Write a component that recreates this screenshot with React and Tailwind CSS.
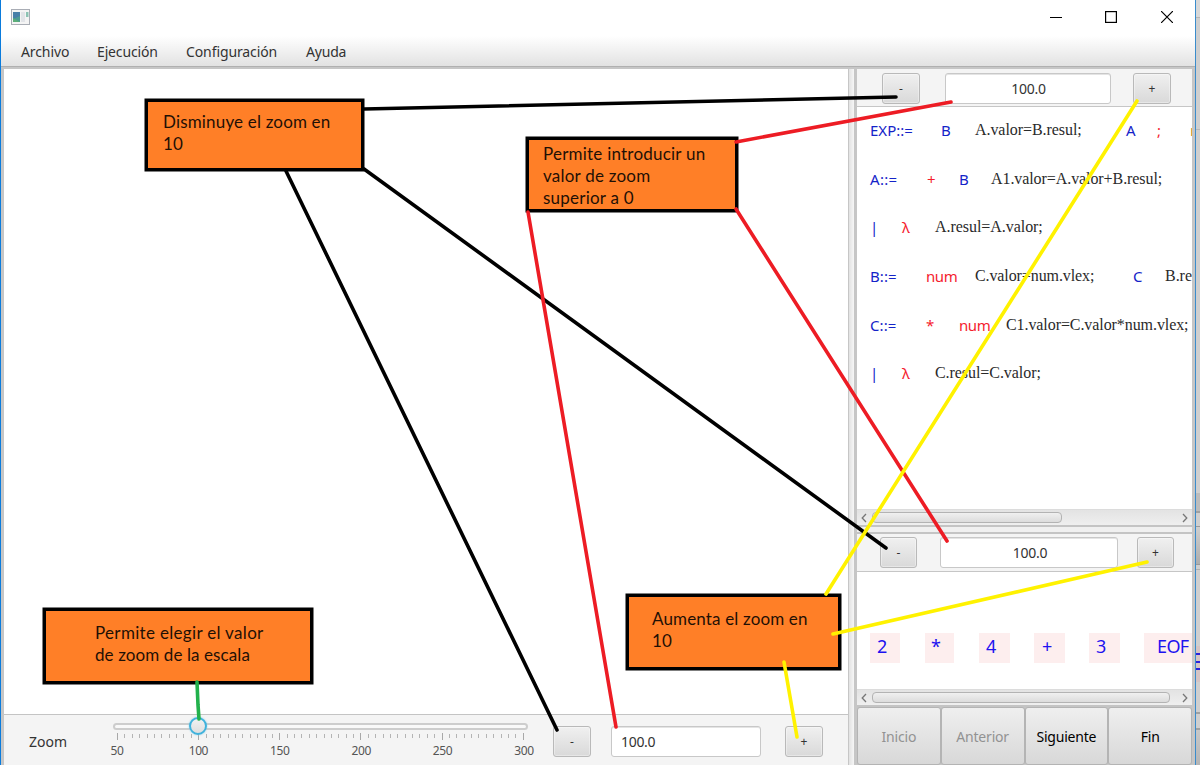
import React from 'react';

const B = 'text-[#1423c8]';
const R = 'text-[#f51c2e]';
const S = 'text-[#2a2a2a]';

/* Each symbol: text, style, column width */
const grammar = [
  [['EXP::=', B, 'w-[71px]', 'tracking-[0px]'], ['B', B, 'w-[34px]', ''], ['A.valor=B.resul;', S, 'w-[151px]', 'tracking-[-0.06px]'], ['A', B, 'w-[31px]', ''], [';', R, 'w-[33px]', ''], ['r', 'text-[#c09030]', 'w-[20px]', '']],
  [['A::=', B, 'w-[57px]', 'tracking-[0.3px]'], ['+', R, 'w-[32px]', ''], ['B', B, 'w-[32px]', ''], ['A1.valor=A.valor+B.resul;', S, 'w-[180px]', 'tracking-[-0.08px]']],
  [['|', B, 'w-[32px]', ''], ['λ', R, 'w-[33px]', ''], ['A.resul=A.valor;', S, 'w-[120px]', 'tracking-[-0.05px]']],
  [['B::=', B, 'w-[56px]', 'tracking-[0.1px]'], ['num', R, 'w-[49px]', 'tracking-[-0.4px]'], ['C.valor=num.vlex;', S, 'w-[158px]', 'tracking-[-0.1px]'], ['C', B, 'w-[32px]', ''], ['B.resul=C.resul;', S, 'w-[120px]', 'tracking-[-0.04px]']],
  [['C::=', B, 'w-[56px]', 'tracking-[0.1px]'], ['*', R, 'w-[33px]', ''], ['num', R, 'w-[47px]', 'tracking-[-0.4px]'], ['C1.valor=C.valor*num.vlex;', S, 'w-[190px]', 'tracking-[-0.08px]']],
  [['|', B, 'w-[32px]', ''], ['λ', R, 'w-[33px]', ''], ['C.resul=C.valor;', S, 'w-[120px]', 'tracking-[-0.06px]']],
];

const tokens = [
  ['2', 'w-[30px] mr-[25px] pl-[7px]'],
  ['*', 'w-[29px] mr-[25px] pl-[6px]'],
  ['4', 'w-[31px] mr-[24px] pl-[7px]'],
  ['+', 'w-[31px] mr-[24px] pl-[8px]'],
  ['3', 'w-[31px] mr-[24px] pl-[7px]'],
  ['EOF', 'w-[60px] pl-[13px] tracking-[-0.6px]'],
];

const ticks = Array.from({ length: 56 }, (_, i) => i);

function SmallButton({ children, className = '' }) {
  return (
    <button
      className={`flex shrink-0 items-center justify-center rounded-[3px] border border-[#b9b9b9] bg-linear-to-b from-[#f0f0f0] to-[#d9d9d9] text-[12px] text-[#333] shadow-[inset_0_0_0_1px_rgba(255,255,255,0.35)] ${className}`}
    >
      {children}
    </button>
  );
}

function Field({ className = '' }) {
  return (
    <div
      className={`flex shrink-0 items-center rounded-[3px] border border-[#c8c8c8] bg-white text-[14px] tracking-[-0.3px] text-[#333] shadow-[inset_0_1px_0_#e4e4e4] ${className}`}
    >
      100.0
    </div>
  );
}

function ScrollBar({ thumb }) {
  return (
    <div className="flex h-4 shrink-0 items-center border-t border-[#dcdcdc] bg-linear-to-b from-[#e3e3e3] to-[#efefef]">
      <svg className="ml-[4px] shrink-0" width="6" height="10" viewBox="0 0 6 10" fill="none" stroke="#777" strokeWidth="1.3">
        <path d="M5 1 1.2 5 5 9" />
      </svg>
      <div className="flex flex-1 pl-[5px]">
        <div className={`h-[11px] rounded-[4px] border border-[#b3b3b3] bg-linear-to-b from-[#f0f0f0] to-[#dcdcdc] ${thumb}`} />
      </div>
      <svg className="mr-[4px] shrink-0" width="6" height="10" viewBox="0 0 6 10" fill="none" stroke="#777" strokeWidth="1.3">
        <path d="M1 1 4.8 5 1 9" />
      </svg>
    </div>
  );
}

function Note({ className, children }) {
  return (
    <div className={`absolute whitespace-nowrap border-[3px] border-black bg-[#ff7f27] font-['Lato',sans-serif] text-[17px] leading-[22px] text-[#1f1005] shadow-[0_0_0_0.5px_#000] ${className}`}>
      {children}
    </div>
  );
}

function TitleBar() {
  return (
    <div className="flex h-9 shrink-0 items-start bg-white">
      <svg className="ml-[10px] mt-[9px]" width="19" height="16" viewBox="0 0 19 16">
        <rect x="0.5" y="0.5" width="18" height="15" fill="#f4f4f4" stroke="#a9adb5" />
        <rect x="2" y="3" width="7" height="10" fill="#4d9a94" />
        <path d="M2 3h7v4L2 10z" fill="#487fa8" />
        <path d="M2 13V9l7 4z" fill="#5cae78" />
        <rect x="10" y="3" width="4" height="10" fill="#e2e4e8" />
        <rect x="15" y="3" width="2.5" height="5" fill="#8cc3b4" />
      </svg>
      <div className="ml-auto flex pt-[11px]">
        <svg width="12" height="12" className="mr-[43px]" stroke="#000" strokeWidth="1" fill="none">
          <path d="M0 6.5h12" />
        </svg>
        <svg width="12" height="12" className="mr-[44px]" stroke="#000" strokeWidth="1.2" fill="none">
          <rect x="0.6" y="0.6" width="10.8" height="10.8" />
        </svg>
        <svg width="12" height="12" className="mr-[22px]" stroke="#000" strokeWidth="1.2" fill="none">
          <path d="M0 0 12 12M12 0 0 12" />
        </svg>
      </div>
    </div>
  );
}

function MenuBar() {
  return (
    <div className="flex h-[31px] shrink-0 items-center border-b border-[#b0b0b0] bg-linear-to-b from-white to-[#e2e2e2] pl-[20px] pt-px text-[14px] text-[#333]">
      <span className="w-[76px] tracking-[-0.1px]">Archivo</span>
      <span className="w-[89px] tracking-[-0.15px]">Ejecución</span>
      <span className="w-[120px] tracking-[-0.1px]">Configuración</span>
      <span className="tracking-[-0.2px]">Ayuda</span>
    </div>
  );
}

function Slider() {
  return (
    <div className="relative ml-[42px] mt-[8px] w-[415px] shrink-0">
      <div className="h-[7px] rounded-full border-2 border-[#cdcdcd] bg-[#f9f9f9]" />
      <div className="mt-[3px] flex h-[7px] justify-between px-[4px]">
        {ticks.map((i) => (
          <i key={i} className={i % 11 === 0 ? 'h-[7px] w-px bg-[#a8a8a8]' : 'mt-px h-[4px] w-px bg-[#b4b4b4]'} />
        ))}
      </div>
      <div className="-mx-[16px] mt-[2px] flex justify-between pl-[6px] pr-[6px] text-[12px] leading-[18px] tracking-[-0.4px] text-[#555]">
        {['50', '100', '150', '200', '250', '300'].map((v) => (
          <span key={v} className="w-[28px] text-center">{v}</span>
        ))}
      </div>
      <div className="absolute left-[76px] top-[-6px] h-[18px] w-[18px] rounded-full border-2 border-[#3fb2dc] bg-linear-to-b from-[#f2f2f2] to-[#dedede] shadow-[0_0_2px_#8ccfe8]" />
    </div>
  );
}

function TreePane() {
  return (
    <section className="flex w-[844px] shrink-0 flex-col">
      <div className="h-[645px] shrink-0 bg-white" />
      <div className="flex flex-1 items-start border-t border-[#c4c4c4] bg-[#f4f4f4]">
        <span className="ml-[25px] mt-[17px] w-[42px] text-[14px] leading-5 text-[#333]">Zoom</span>
        <Slider />
        <SmallButton className="ml-[25px] mt-[11px] h-[31px] w-[38px]">-</SmallButton>
        <Field className="ml-[20px] mt-[11px] h-[31px] w-[150px] pl-[9px]" />
        <SmallButton className="ml-[24px] mt-[11px] h-[31px] w-[38px]">+</SmallButton>
      </div>
    </section>
  );
}

function SidePane() {
  return (
    <section className="flex w-[335px] shrink-0 flex-col">
      <div className="flex h-[38px] shrink-0 items-start border-b border-[#c6c6c6] bg-[#f4f4f4] pt-[4px]">
        <SmallButton className="ml-[25px] h-[31px] w-[38px]">-</SmallButton>
        <Field className="ml-[25px] h-[31px] w-[166px] justify-center pl-px" />
        <SmallButton className="ml-[22px] h-[31px] w-[38px]">+</SmallButton>
      </div>
      <div className="flex h-[402px] shrink-0 flex-col overflow-hidden bg-white pt-[11px]">
        {grammar.map((row, i) => (
          <div key={i} className="flex h-[48.7px] shrink-0 whitespace-nowrap pl-[13px]">
            {row.map(([text, color, width, track], j) => (
              <span
                key={j}
                className={`shrink-0 ${color} ${width} ${track} ${color === S ? "font-['Liberation_Serif',serif] text-[16px] leading-[23px]" : 'text-[15px] leading-[24px]'}`}
              >
                {text}
              </span>
            ))}
          </div>
        ))}
      </div>
      <ScrollBar thumb="w-[190px]" />
      <div className="h-[9px] shrink-0 border-y-2 border-[#c4c4c4] bg-[#f0f0f0]" />
      <div className="flex h-[38px] shrink-0 items-start border-b border-[#c6c6c6] bg-[#f4f4f4] pt-[3px]">
        <SmallButton className="ml-[23px] h-[31px] w-[37px]">-</SmallButton>
        <Field className="ml-[23px] h-[31px] w-[178px] justify-center pl-[2px]" />
        <SmallButton className="ml-[19px] h-[31px] w-[37px]">+</SmallButton>
      </div>
      <div className="flex h-[117px] shrink-0 items-start overflow-hidden bg-white pl-[13px] pt-[61px] text-[18px] leading-[27px] text-[#1d12f0]">
        {tokens.map(([t, cls]) => (
          <span key={t} className={`h-[30px] shrink-0 bg-[#fdeeee] ${cls}`}>{t}</span>
        ))}
      </div>
      <ScrollBar thumb="w-[298px]" />
      <div className="grid flex-1 grid-cols-4 bg-[#c4c4c4] pt-[2px]">
        {['Inicio', 'Anterior', 'Siguiente', 'Fin'].map((label, i) => (
          <button
            key={label}
            className={`rounded-[3px] border border-[#b4b4b4] bg-linear-to-b from-[#efefef] to-[#d8d8d8] text-[14px] tracking-[-0.2px] ${i < 2 ? 'text-[#929292]' : 'text-black'}`}
          >
            {label}
          </button>
        ))}
      </div>
    </section>
  );
}

/* Sliver of the window lying behind */
function BackWindow() {
  return (
    <div className="flex w-[4px] shrink-0 flex-col bg-[#cfcfcf]">
      <div className="h-[18px] border-b border-[#b5b5b5] bg-[#d8d8d8]" />
      <div className="h-[112px] border-b border-[#b8b8b8]" />
      <div className="h-[131px]" />
      <div className="h-[232px]" />
      <div className="h-[20px] border-b-2 border-[#a0a0a0] bg-[#bcbcbc]" />
      <div className="h-[14px] border-b border-[#999]" />
      <div className="h-[38px] border-b border-[#999] bg-linear-to-b from-[#cfcfcf] to-[#adadad]" />
      <div className="h-[5px] border-b border-[#b0b0b0]" />
      <div className="h-[76px]" />
      <div className="flex h-[36px] flex-col bg-[#d4c4c4] pt-[7px]">
        <i className="mb-[6px] h-[2px] bg-[#2a22dd]" />
        <i className="mb-[5px] h-[2px] bg-[#2a22dd]" />
        <i className="h-[2px] bg-[#2a22dd]" />
      </div>
      <div className="h-[32px] border-b-2 border-[#a0a0a0]" />
      <div className="h-[16px] border-b-2 border-[#a0a0a0]" />
      <div className="flex-1 bg-linear-to-b from-[#c8c8c8] to-[#b5b5b5]" />
    </div>
  );
}

function Annotations() {
  return (
    <>
      <Note className="left-[145px] top-[99px] h-[72px] w-[219px] pl-[15px] pt-[9px] tracking-[0.17px]">Disminuye el zoom en<br />10</Note>
      <Note className="left-[526px] top-[137px] h-[75px] w-[212px] pl-[14px] pt-[3px] tracking-[0.22px]">Permite introducir un<br />valor de zoom<br />superior a 0</Note>
      <Note className="left-[626px] top-[594px] h-[76px] w-[215px] pl-[23px] pt-[11px] tracking-[0.15px]">Aumenta el zoom en<br />10</Note>
      <Note className="left-[43px] top-[608px] h-[76px] w-[270px] pl-[49px] pt-[11px] tracking-[0.32px]">Permite elegir el valor<br /><span className="tracking-[0.1px]">de zoom de la escala</span></Note>
      <svg className="pointer-events-none absolute left-0 top-0" width="1200" height="765" fill="none" strokeWidth="3.6" strokeLinecap="round">
        <g stroke="#000">
          <path d="M364 109 896 97" />
          <path d="M286 171 557 730" />
          <path d="M364 169 886 548" />
        </g>
        <g stroke="#ed1c24">
          <path d="M736 142 951 102" />
          <path d="M736 209 947 541" />
          <path d="M528 212 616 727" />
        </g>
        <g stroke="#fff200">
          <path d="M826 594 1137 101" />
          <path d="M833 634 1147 562" />
          <path d="M784 662 797 737" />
        </g>
        <path d="M197 682 198 705 199 719" stroke="#22b14c" />
      </svg>
    </>
  );
}

export default function App() {
  return (
    <div className="relative flex h-[765px] w-[1200px] overflow-hidden font-['Noto_Sans',sans-serif]">
      <div className="flex w-[1196px] shrink-0 flex-col border-x border-l-[#0a7bdc] border-r-[#3a8ccc] bg-white">
        <TitleBar />
        <MenuBar />
        <div className="flex flex-1 bg-[#c6c6c6] pl-[3px] pt-[2px]">
          <TreePane />
          <div className="flex w-[9px] shrink-0 bg-[#c6c6c6] pl-[1px] pr-[3px]">
            <div className="flex-1 bg-linear-to-r from-[#e2e2e2] to-[#f6f6f6]" />
          </div>
          <SidePane />
        </div>
      </div>
      <BackWindow />
      <Annotations />
    </div>
  );
}
